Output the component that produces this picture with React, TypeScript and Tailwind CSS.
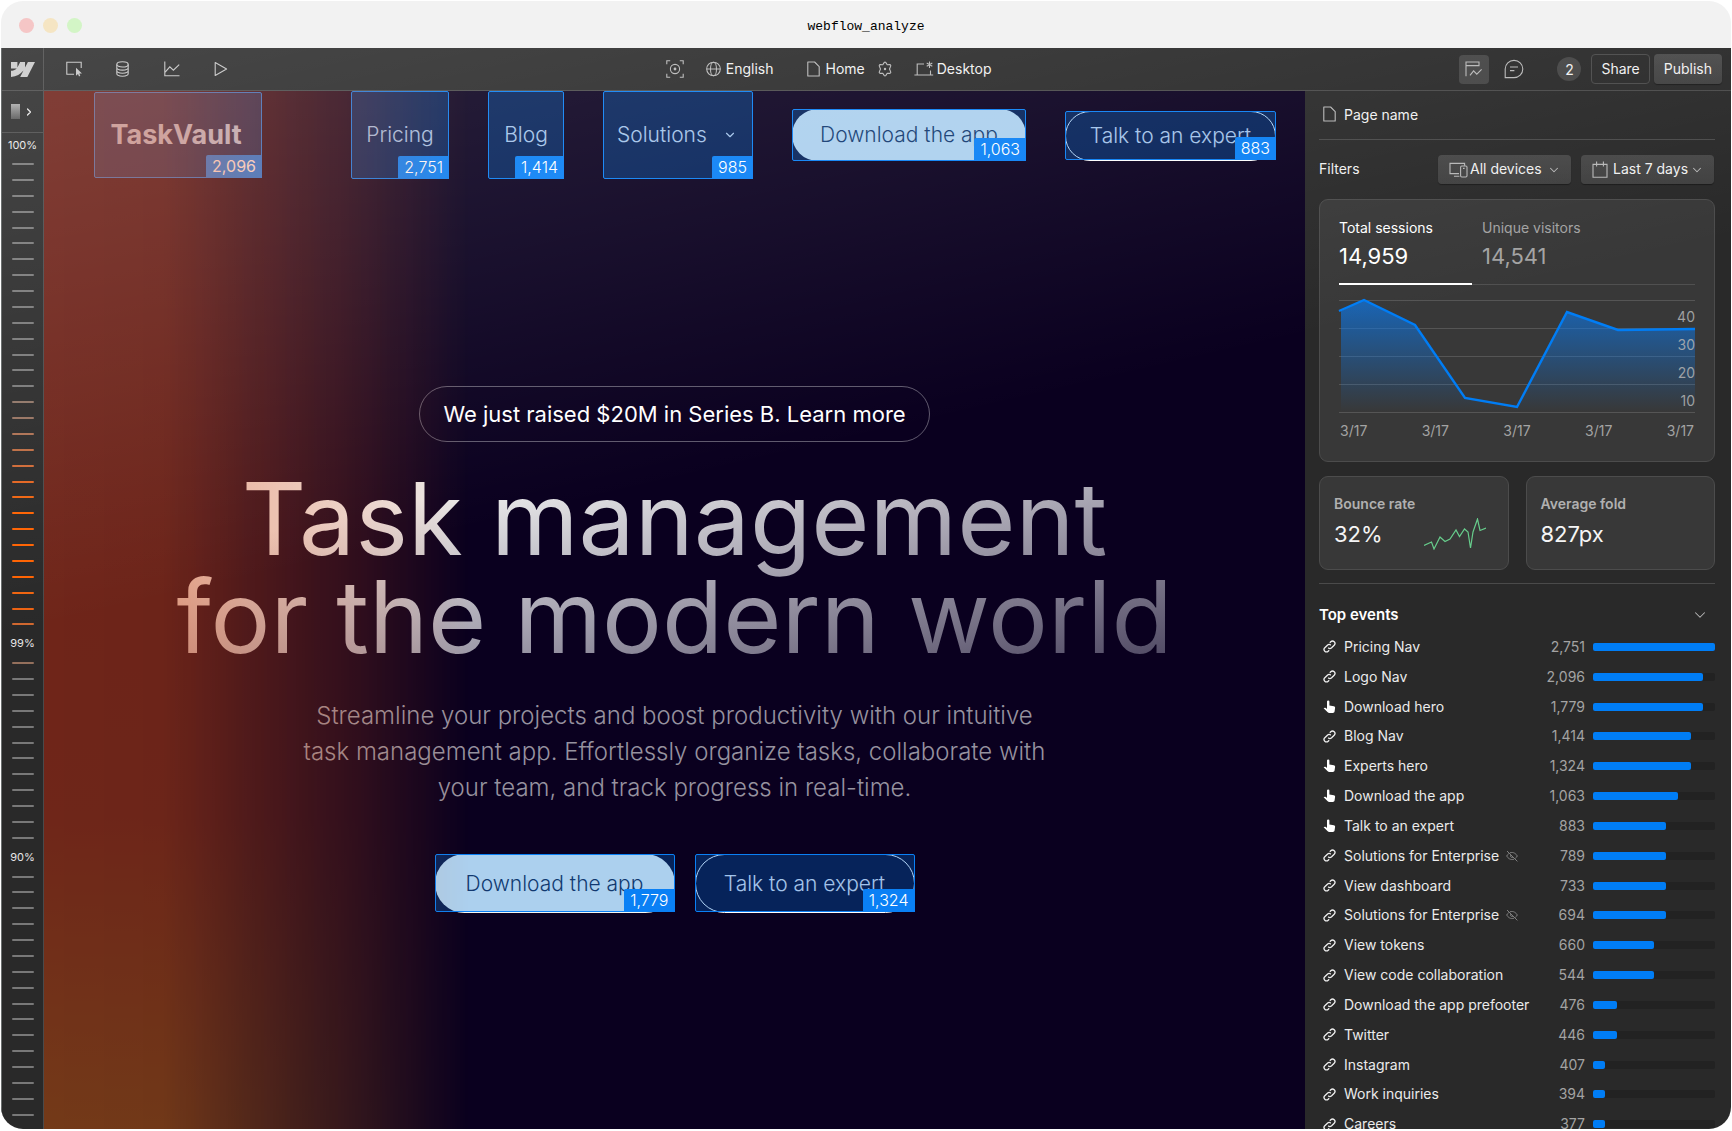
import { useState, type ReactNode } from "react"
import { ChevronDown, ChevronRight } from "lucide-react"
import clsx from "clsx"

interface TopEvent {
  name: string
  kind: "link" | "tap"
  count: string
  share: number
  hidden?: boolean
}

const events: TopEvent[] = [
  { name: "Pricing Nav", kind: "link", count: "2,751", share: 100 },
  { name: "Logo Nav", kind: "link", count: "2,096", share: 90 },
  { name: "Download hero", kind: "tap", count: "1,779", share: 90 },
  { name: "Blog Nav", kind: "link", count: "1,414", share: 80 },
  { name: "Experts hero", kind: "tap", count: "1,324", share: 80 },
  { name: "Download the app", kind: "tap", count: "1,063", share: 70 },
  { name: "Talk to an expert", kind: "tap", count: "883", share: 60 },
  { name: "Solutions for Enterprise", kind: "link", count: "789", share: 60, hidden: true },
  { name: "View dashboard", kind: "link", count: "733", share: 60 },
  { name: "Solutions for Enterprise", kind: "link", count: "694", share: 60, hidden: true },
  { name: "View tokens", kind: "link", count: "660", share: 50 },
  { name: "View code collaboration", kind: "link", count: "544", share: 50 },
  { name: "Download the app prefooter", kind: "link", count: "476", share: 20 },
  { name: "Twitter", kind: "link", count: "446", share: 20 },
  { name: "Instagram", kind: "link", count: "407", share: 10 },
  { name: "Work inquiries", kind: "link", count: "394", share: 10 },
  { name: "Careers", kind: "link", count: "377", share: 10 },
]

// Scroll depth ticks, hot ones are listed by index
const heat: Record<number, string> = {
  15: "#8f7567", 16: "#967260", 17: "#ad7052", 18: "#bd6c42", 19: "#cf6935",
  20: "#e4641f", 21: "#f0640f", 22: "#ff6200", 23: "#ff6200", 24: "#ff6200",
  25: "#ff6200", 26: "#ff6200", 27: "#f0640f", 28: "#ec6212", 29: "#d0682f",
  30: "#94705c",
}

const sans = "font-['Inter','Liberation_Sans',sans-serif]"

/* ---------- icons ---------- */

function Icon({ w, h, children, className }: { w: number; h: number; children: ReactNode; className?: string }) {
  return (
    <svg
      width={w}
      height={h}
      viewBox={`0 0 ${w} ${h}`}
      fill="none"
      stroke="currentColor"
      strokeWidth="1.1"
      className={clsx("shrink-0", className)}
      aria-hidden="true"
    >
      {children}
    </svg>
  )
}

const WebflowMark = () => (
  <svg width="24" height="15" viewBox="0 4.5 24 15" fill="#c9c9c9" aria-hidden="true">
    <path d="m24 4.515-7.658 14.97H9.149l3.205-6.204h-.144C9.566 16.713 5.621 18.973 0 19.485v-6.118s3.596-.213 5.71-2.435H0V4.515h6.417v5.278l.144-.001 2.622-5.277h4.854v5.244h.144l2.72-5.244H24Z" />
  </svg>
)

const SelectIcon = () => (
  <Icon w={16} h={16}>
    <path d="M8 13.2H.8V1.2h14.4V7" />
    <path d="M10 6.8v8l2-1.8 1 2.4 1.3-.6-1-2.3h2.7z" fill="currentColor" stroke="none" />
  </Icon>
)

const DatabaseIcon = () => (
  <Icon w={13} h={16}>
    <ellipse cx="6.5" cy="3.4" rx="5.7" ry="2.6" />
    <path d="M.8 3.4v9.2c0 1.4 2.5 2.6 5.7 2.6s5.7-1.2 5.7-2.6V3.4M.8 6.5c0 1.4 2.5 2.6 5.7 2.6s5.7-1.2 5.7-2.6M.8 9.6c0 1.4 2.5 2.6 5.7 2.6s5.7-1.2 5.7-2.6" />
  </Icon>
)

const TrendIcon = () => (
  <Icon w={16} h={16}>
    <path d="M.8.5v14.2h14.7M1.2 11.2l4.6-5.4 3.6 3.4 5.8-5.6" />
  </Icon>
)

const PlayIcon = () => (
  <Icon w={14} h={16}>
    <path d="M1.2 1.6v12.8L12.6 8z" strokeLinejoin="round" />
  </Icon>
)

const FocusIcon = () => (
  <Icon w={18} h={18}>
    <path d="M.8 4.2V.8h3.4M13.8.8h3.4v3.4M17.2 13.8v3.4h-3.4M4.2 17.2H.8v-3.4" />
    <circle cx="9" cy="9" r="4.6" />
    <circle cx="9" cy="9" r="1.4" fill="currentColor" stroke="none" />
  </Icon>
)

const GlobeIcon = () => (
  <Icon w={15} h={16}>
    <circle cx="7.5" cy="8" r="6.8" />
    <ellipse cx="7.5" cy="8" rx="3" ry="6.8" />
    <path d="M.7 8h13.6" />
  </Icon>
)

const PageIcon = () => (
  <Icon w={13} h={16}>
    <path d="M.8 1h6.8l4.6 4.6V15H.8z" strokeLinejoin="round" />
  </Icon>
)

const GearIcon = () => (
  <Icon w={16} h={16}>
    <path
      d="M7.1 1.6Q8 .6 8.9 1.6L10.2 3.7 12.7 3.6Q14.2 3.9 13.6 5.4L12.5 8 13.6 10.6Q14.2 12.1 12.7 12.4L10.2 12.3 8.9 14.4Q8 15.4 7.1 14.4L5.8 12.3 3.3 12.4Q1.8 12.1 2.4 10.6L3.5 8 2.4 5.4Q1.8 3.9 3.3 3.6L5.8 3.7z"
      strokeLinejoin="round"
    />
    <circle cx="8" cy="8" r="1.2" fill="currentColor" stroke="none" />
  </Icon>
)

const DesktopIcon = () => (
  <Icon w={20} h={16}>
    <path d="M10 3H3.2v10.6M16.5 9.5v4.1M.4 14h18.8" />
    <path d="M15.5.5v6.4M12.7 2.1l5.6 3.2M18.3 2.1l-5.6 3.2" />
  </Icon>
)

const AnalyzeIcon = () => (
  <Icon w={18} h={16}>
    <path d="M1 15.2V1h13v3.6H1M5 14.4l3.6-4.6 3.2 3.4 4.8-4.8" />
  </Icon>
)

const CommentIcon = () => (
  <Icon w={20} h={20}>
    <path d="M1.2 18.6V10a8.8 8.6 0 1 1 8.8 8.6zM6 8h8M6 11.6h4.4" />
  </Icon>
)

const DevicesIcon = () => (
  <Icon w={19} h={16}>
    <path d="M10 11.6H1V1.4h14.6v2.4M5 14.2h5.4" />
    <rect x="11.6" y="4" width="6.4" height="11" rx="1.2" />
    <path d="M14 6.4h1.6" />
  </Icon>
)

const CalendarIcon = () => (
  <Icon w={16} h={17}>
    <path d="M1 3.4h14v12.8H1zM4.6.6v5M11.4.6v5" />
  </Icon>
)

const LinkIcon = () => (
  <Icon w={13} h={13} className="text-[#eeeeee]">
    <path
      d="M5.2 7.8a2.5 2.5 0 0 0 3.4 0l2.6-2.6a2.4 2.4 0 0 0-3.4-3.4l-1 1M7.8 5.2a2.5 2.5 0 0 0-3.4 0L1.8 7.8a2.4 2.4 0 0 0 3.4 3.4l1-1"
      strokeWidth="1.3"
    />
  </Icon>
)

const TapIcon = () => (
  <Icon w={13} h={14}>
    <path
      d="M4 1.6a1.2 1.2 0 0 1 2.4 0v3.9l4.4.7c.9.2 1.4.8 1.3 1.7l-.5 3.4c-.1 1-.8 1.7-1.8 1.7H6.3c-.7 0-1.2-.3-1.6-.8L.6 8.3c.5-.7 1.5-.8 2.2-.3l1.2.9z"
      fill="#fff"
      stroke="none"
    />
  </Icon>
)

const HiddenIcon = () => (
  <Icon w={12} h={12} className="text-[#8a8a8a]">
    <path
      d="M1 1l10.4 10.4M4 2.8C7.5 1.6 10 3.8 11.3 6c-.5.9-1.2 1.8-2 2.4M2.8 3.6C1.9 4.2 1.2 5.1.7 6 2 8.3 4.5 10.3 8 9.2M4.6 5.2a1.7 1.7 0 0 0 2.2 2.2"
      strokeWidth="0.9"
    />
  </Icon>
)

/* ---------- canvas pieces ---------- */

interface HotspotProps {
  count: string
  className?: string
  children: ReactNode
}

// Element on the analysed page with its click count laid over it
function Hotspot({ count, className, children }: HotspotProps) {
  return (
    <div className={clsx("relative flex", className)}>
      {children}
      <span className="pointer-events-none absolute inset-0 rounded-[2px] border border-[#0a80f5] bg-[#0073e6]/30" />
      <span className="absolute right-0 bottom-0 h-[23px] rounded-tl-[2px] bg-[#0a80f5] px-[6px] text-[16px] leading-[22px] text-white">
        {count}
      </span>
    </div>
  )
}

function Rail() {
  const ticks = (from: number, to: number) =>
    Array.from({ length: to - from }, (_, i) => (
      <span
        key={from + i}
        className="h-[2px] w-[22px] rounded-full"
        style={{ backgroundColor: heat[from + i] ?? "#787878" }}
      />
    ))

  return (
    <aside className="flex w-[42px] shrink-0 flex-col items-center border-r border-[#4a4a4a] text-[11px] text-[#e6e6e6]">
      <button
        className="flex h-[42px] w-full items-center justify-center gap-[3px] border-b border-[#4a4a4a]"
        aria-label="Expand scroll depth"
      >
        <span className="h-[15px] w-[9px] bg-linear-to-b from-[#a8a8a8] to-[#555555]" />
        <ChevronRight size={12} strokeWidth={2.5} />
      </button>
      <span className="mt-[5px] leading-[14px]">100%</span>
      <div className="mt-[11px] mb-[13px] flex flex-1 flex-col items-center justify-between">
        {ticks(0, 30)}
        <span className="leading-[9px]">99%</span>
        {ticks(30, 42)}
        <span className="leading-[9px]">90%</span>
        {ticks(42, 58)}
      </div>
    </aside>
  )
}

function Canvas() {
  return (
    <main className="relative min-w-0 flex-1 overflow-hidden bg-[#0a001f] text-[21px] text-[#e8e6ee]">
      <header className="flex h-[88px] items-center pl-[50px]">
        <Hotspot count="2,096" className="h-[86px] w-[168px]">
          <a href="#home" className="flex w-full items-center justify-center pr-[4px] text-[27px] font-bold text-white">
            TaskVault
          </a>
        </Hotspot>
        <nav className="ml-[89px] flex items-center gap-[39px] font-light">
          <Hotspot count="2,751" className="h-[88px] w-[98px]">
            <a href="#pricing" className="flex w-full items-center justify-center">Pricing</a>
          </Hotspot>
          <Hotspot count="1,414" className="h-[88px] w-[76px]">
            <a href="#blog" className="flex w-full items-center justify-center">Blog</a>
          </Hotspot>
          <Hotspot count="985" className="h-[88px] w-[150px]">
            <button className="flex w-full items-center justify-between px-[14px]">
              Solutions
              <ChevronDown size={14} strokeWidth={2} className="mr-[2px]" />
            </button>
          </Hotspot>
          <Hotspot count="1,063" className="h-[52px] w-[234px]">
            <button className="w-full rounded-full bg-[#f6f8f3] text-[#1a1f3d]">Download the app</button>
          </Hotspot>
          <Hotspot count="883" className="h-[49px] w-[211px]">
            <button className="-mb-px w-full rounded-full border border-white">Talk to an expert</button>
          </Hotspot>
        </nav>
      </header>

      <section className="flex flex-col items-center pt-[207px] text-center">
        <a
          href="#news"
          className="flex h-[56px] items-center rounded-full border border-white/35 px-[23px] text-[22px] text-white"
        >
          We just raised $20M in Series B. Learn more
        </a>
        <h1 className="mt-[28px] bg-linear-[168deg,#ededed_0%,#ededed_20%,#a8a5b2_55%,#4c4560_100%] bg-clip-text text-[100px] leading-[98px] text-transparent">
          Task management
          <br />
          for the modern world
        </h1>
        <p className="mt-[32px] text-[24px] leading-[36px] font-light text-[#96929f]">
          Streamline your projects and boost productivity with our intuitive
          <br />
          task management app. Effortlessly organize tasks, collaborate with
          <br />
          your team, and track progress in real-time.
        </p>
        <div className="mt-[48px] flex gap-[20px] font-light">
          <Hotspot count="1,779" className="h-[58px] w-[240px]">
            <button className="-mb-px w-full rounded-full bg-[#f6f8f3] text-[#1a1f3d]">Download the app</button>
          </Hotspot>
          <Hotspot count="1,324" className="h-[58px] w-[220px]">
            <button className="-mb-px w-full rounded-full border border-white">Talk to an expert</button>
          </Hotspot>
        </div>
      </section>

      {/* Scroll heat bleeding in from the rail */}
      <div className="pointer-events-none absolute inset-y-0 left-0 w-[425px] bg-linear-to-b from-[#e84a12] via-[#eb5412] via-70% to-[#f58010] [mask-image:linear-gradient(to_right,rgba(0,0,0,.45)_0%,rgba(0,0,0,.44)_28%,rgba(0,0,0,.3)_50%,rgba(0,0,0,.16)_75%,transparent_100%)]" />
    </main>
  )
}

/* ---------- panel pieces ---------- */

interface FilterProps {
  label: string
  icon: ReactNode
  options: string[]
}

function Filter({ label, icon, options }: FilterProps) {
  return (
    <div className="relative flex items-center text-[#b8b8b8]">
      <span className="pointer-events-none absolute left-[11px]">{icon}</span>
      <select
        aria-label={label}
        className="h-[29px] w-[133px] appearance-none rounded-[4px] bg-linear-to-b from-[#474747] to-[#3f3f3f] pb-[2px] pl-[32px] text-[14px] text-[#f0f0f0] shadow-[0_1px_1px_rgba(0,0,0,.4)]"
      >
        {options.map((o) => (
          <option key={o}>{o}</option>
        ))}
      </select>
      <ChevronDown size={14} strokeWidth={1.8} className="pointer-events-none absolute right-[10px]" />
    </div>
  )
}

const linePoints = "0,11 25,0 76,25 126,98 178,107 228,12 279,30 356,29"

function SessionsCard() {
  const [tab, setTab] = useState(0)
  const tabs = [
    { label: "Total sessions", value: "14,959" },
    { label: "Unique visitors", value: "14,541" },
  ]

  return (
    <section className="rounded-[9px] border border-[#4c4c4c] bg-[#383838] px-[19px] pt-[16px] pb-[20px]">
      <div role="tablist" className="flex border-b border-[#505050]">
        {tabs.map((t, i) => (
          <button
            key={t.label}
            role="tab"
            aria-selected={tab === i}
            onClick={() => setTab(i)}
            className={clsx(
              "-mb-px h-[69px] border-b-2 text-left",
              i === 0 ? "w-[133px]" : "ml-[10px] w-[133px]",
              tab === i ? "border-white text-white" : "border-transparent text-[#a3a3a3]"
            )}
          >
            <span className="block text-[14px] leading-[24px]">{t.label}</span>
            <span className="block pb-[13px] text-[22px] leading-[32px]">{t.value}</span>
          </button>
        ))}
      </div>

      <div className="relative mt-[14px] h-[114px]">
        <svg
          viewBox="0 -1 356 114"
          preserveAspectRatio="none"
          className="h-full w-full overflow-visible"
          role="img"
          aria-label="Sessions per day"
        >
          <defs>
            <linearGradient id="area" x1="0" y1="0" x2="0" y2="1">
              <stop offset="0" stopColor="#0a7af0" stopOpacity=".68" />
              <stop offset="1" stopColor="#0a7af0" stopOpacity="0" />
            </linearGradient>
          </defs>
          <path d="M0 .5h356M0 28.5h356M0 56.5h356M0 84.5h356M0 112.5h356" stroke="#555555" />
          <polygon points={`2,112 2,11 ${linePoints.slice(5)} 356,112`} fill="url(#area)" />
          <polyline points={linePoints} fill="none" stroke="#007df5" strokeWidth="2.4" />
        </svg>
        <div className="absolute top-[4px] right-0 flex flex-col text-right text-[14px] leading-[28px] text-[#b4b4b4]/85">
          <span>40</span>
          <span>30</span>
          <span>20</span>
          <span>10</span>
        </div>
      </div>

      <div className="mt-[8px] flex justify-between px-[1px] text-[14px] leading-[20px] text-[#a3a3a3]">
        {[0, 1, 2, 3, 4].map((d) => (
          <span key={d}>3/17</span>
        ))}
      </div>
    </section>
  )
}

function StatCard({ label, value, children }: { label: string; value: string; children?: ReactNode }) {
  return (
    <section className="h-[94px] flex-1 rounded-[9px] border border-[#4c4c4c] bg-[#383838] px-[14px] pt-[16px]">
      <h2 className="text-[14px] leading-[22px] font-semibold text-[#b0b0b0]">{label}</h2>
      <div className="flex items-center justify-between">
        <p className="text-[22px] leading-[38px] text-[#f5f5f5]">{value}</p>
        {children}
      </div>
    </section>
  )
}

function EventRow({ event }: { event: TopEvent }) {
  return (
    <li className="flex min-h-0 flex-1 items-center">
      <span className="flex w-[25px] pl-[4px]">{event.kind === "link" ? <LinkIcon /> : <TapIcon />}</span>
      <span className="text-[14px] leading-[20px] text-[#ebebeb]">{event.name}</span>
      {event.hidden && (
        <span className="ml-[7px]">
          <HiddenIcon />
        </span>
      )}
      <span className="ml-auto text-[14px] leading-[20px] text-[#a3a3a3]">{event.count}</span>
      <span className="ml-[8px] h-[8px] w-[122px] rounded-[2px] bg-[#222222]">
        <span className="block h-full rounded-[2px] bg-[#007df5]" style={{ width: `${event.share}%` }} />
      </span>
    </li>
  )
}

function Panel() {
  return (
    <aside className="flex w-[426px] shrink-0 flex-col overflow-hidden pr-[16px] pl-[14px] text-[14px] text-[#f0f0f0]">
      <div className="flex h-[49px] items-center gap-[8px] border-b border-[#4a4a4a] pb-[2px] pl-[4px]">
        <span className="text-[#b8b8b8]">
          <PageIcon />
        </span>
        Page name
      </div>
      <div className="flex h-[59px] items-center gap-[10px] pr-[1px]">
        <span className="mr-auto pb-[2px]">Filters</span>
        <Filter label="Devices" icon={<DevicesIcon />} options={["All devices", "Desktop", "Mobile"]} />
        <Filter label="Date range" icon={<CalendarIcon />} options={["Last 7 days", "Last 30 days"]} />
      </div>

      <SessionsCard />

      <div className="mt-[14px] flex gap-[17px] border-b border-[#4a4a4a] pb-[13px]">
        <StatCard label="Bounce rate" value="32%">
          <svg
            width="62"
            height="32"
            viewBox="0 0 62 32"
            fill="none"
            stroke="#67cd8c"
            strokeWidth="1.2"
            className="mr-[8px]"
            aria-hidden="true"
          >
            <path d="M0 27.5 7.5 24 10 31l6-12 5 4.5 5-2.5 6-9 3.5 6.5 5-7.5 3.5 3 2.5 16 2.5-16L53.5 1 56 12.5l6-2.5" />
          </svg>
        </StatCard>
        <StatCard label="Average fold" value="827px" />
      </div>

      <button className="mt-[16px] flex h-[30px] items-center justify-between pr-[6px] text-[15px] font-semibold text-white">
        Top events
        <ChevronDown size={18} strokeWidth={1.4} className="text-[#b8b8b8]" />
      </button>
      <ul className="-mb-[10px] flex flex-1 flex-col pt-[2px]">
        {events.map((e) => (
          <EventRow key={e.name + e.count} event={e} />
        ))}
      </ul>
    </aside>
  )
}

function Toolbar() {
  return (
    <div className="flex h-[43px] shrink-0 items-center border-b border-[#4a4a4a] text-[14px] text-[#f0f0f0]">
      <a
        href="#dashboard"
        aria-label="Webflow"
        className="flex h-full w-[42px] items-center justify-center border-r border-[#4a4a4a]"
      >
        <WebflowMark />
      </a>
      <div className="flex flex-5 items-center pl-[5px] text-[#c4c4c4]">
        <button aria-label="Select" className="flex w-[49px] justify-center"><SelectIcon /></button>
        <button aria-label="CMS" className="flex w-[49px] justify-center"><DatabaseIcon /></button>
        <button aria-label="Insights" className="flex w-[49px] justify-center"><TrendIcon /></button>
        <button aria-label="Preview" className="flex w-[49px] justify-center"><PlayIcon /></button>
      </div>
      <div className="flex items-center pl-[8px] text-[#b8b8b8]">
        <button aria-label="Focus"><FocusIcon /></button>
        <button className="ml-[22px] flex items-center gap-[5px]">
          <GlobeIcon />
          <span className="pb-[1px] text-[#f0f0f0]">English</span>
        </button>
        <button className="ml-[33px] flex items-center gap-[6px]">
          <PageIcon />
          <span className="pb-[1px] text-[#f0f0f0]">Home</span>
        </button>
        <button aria-label="Page settings" className="ml-[12px]"><GearIcon /></button>
        <button className="ml-[21px] flex items-center gap-[3px]">
          <DesktopIcon />
          <span className="pb-[1px] text-[#f0f0f0]">Desktop</span>
        </button>
      </div>
      <div className="flex flex-6 items-center justify-end pr-[9px]">
        <button
          aria-label="Analyze"
          className="flex h-[29px] w-[30px] items-center justify-center rounded-[4px] bg-[#444444] text-[#b8b8b8]"
        >
          <AnalyzeIcon />
        </button>
        <button aria-label="Comments" className="ml-[15px] text-[#b8b8b8]"><CommentIcon /></button>
        <span className="ml-[33px] flex h-[24px] w-[24px] items-center justify-center rounded-full bg-[#444444]">2</span>
        <button className="ml-[10px] h-[30px] rounded-[4px] border border-[#4a4a4a] px-[9px] pb-[1px]">Share</button>
        <button className="ml-[4px] h-[30px] rounded-[4px] bg-linear-to-b from-[#4a4a4a] to-[#404040] px-[10px] pb-[1px] shadow-[0_1px_1px_rgba(0,0,0,.4)]">
          Publish
        </button>
      </div>
    </div>
  )
}

export default function App() {
  return (
    <div className={clsx("h-screen bg-white p-px pb-[2px]", sans)}>
      <div className="flex h-full flex-col overflow-hidden rounded-[22px] bg-[#f2f2f2]">
        <div className="flex h-[47px] shrink-0 items-center px-[18px] pt-[2px]">
          <div className="flex flex-1 gap-[9px]">
            <span className="h-[15px] w-[15px] rounded-full bg-[#f5c6c6]" />
            <span className="h-[15px] w-[15px] rounded-full bg-[#f5e5c3]" />
            <span className="h-[15px] w-[15px] rounded-full bg-[#d3f5c6]" />
          </div>
          <h1 className="pt-[2px] font-['Liberation_Mono',monospace] text-[13px] text-black">webflow_analyze</h1>
          <div className="flex-1" />
        </div>

        <div className="relative flex min-h-0 flex-1 flex-col border-l border-[#6b6f6f] bg-[#292929]">
          <Toolbar />
          <div className="flex min-h-0 flex-1">
            <Rail />
            <Canvas />
            <Panel />
          </div>
          {/* Soft light from the top left corner */}
          <div className="pointer-events-none absolute inset-0 bg-linear-[167deg,rgba(255,255,255,.14)_0%,rgba(255,255,255,0)_40%]" />
        </div>
      </div>
    </div>
  )
}
